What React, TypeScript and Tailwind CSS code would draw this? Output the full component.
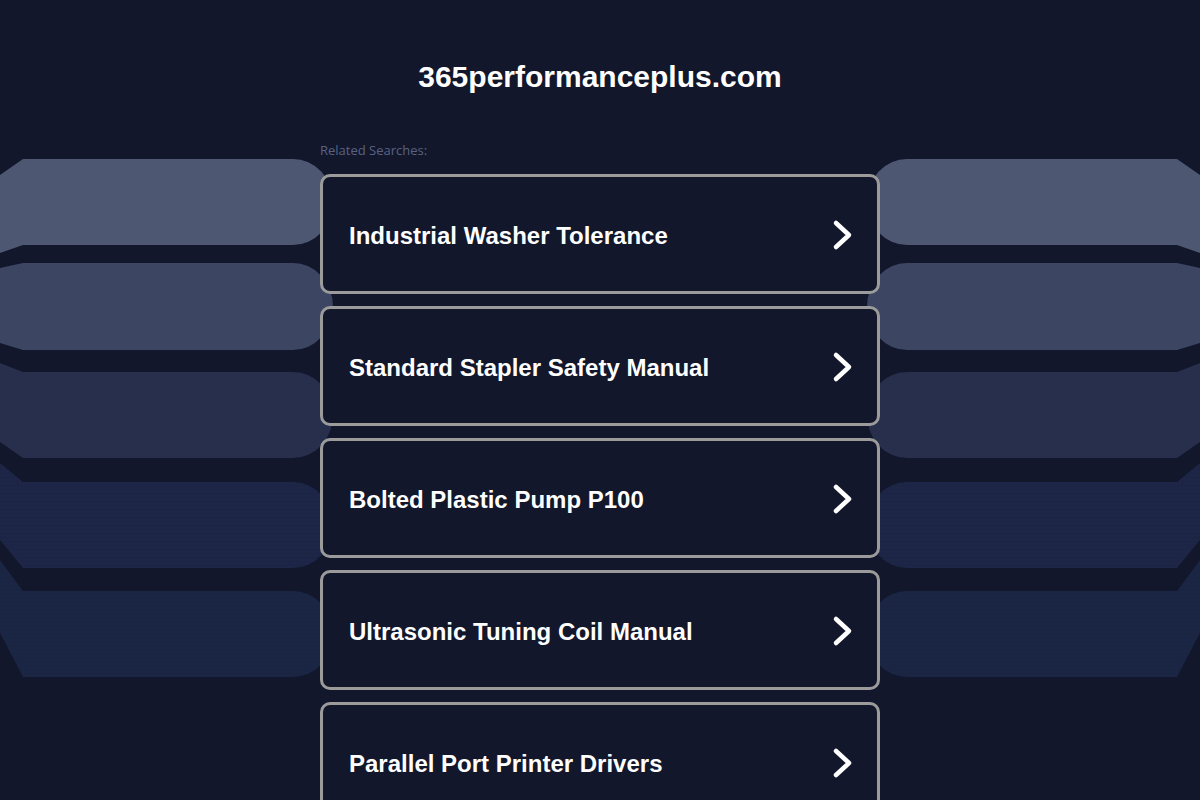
import React from "react";

const SEARCHES = [
  "Industrial Washer Tolerance",
  "Standard Stapler Safety Manual",
  "Bolted Plastic Pump P100",
  "Ultrasonic Tuning Coil Manual",
  "Parallel Port Printer Drivers",
];

// left-side bands: top, bottom, left-edge top, left-edge bottom, fill
const BANDS = [
  { t: 159, b: 245, lt: 175, lb: 253, fill: "#4e5772", dots: false },
  { t: 263, b: 350, lt: 268, lb: 343, fill: "#3c4562", dots: false },
  { t: 372, b: 458, lt: 363, lb: 442, fill: "#272f4d", dots: false },
  { t: 482, b: 568, lt: 463, lb: 540, fill: "#1d2646", dots: true },
  { t: 591, b: 677, lt: 560, lb: 633, fill: "#1b2544", dots: true },
];

function bandPath(t: number, b: number, lt: number, lb: number) {
  const ry = (b - t) / 2;
  return `M0 ${lt} L23 ${t} H293 A40 ${ry} 0 0 1 293 ${b} H23 L0 ${lb} Z`;
}

function Backdrop() {
  const shapes = BANDS.map((s, i) => (
    <g key={i}>
      <path d={bandPath(s.t, s.b, s.lt, s.lb)} fill={s.fill} />
      {s.dots && <path d={bandPath(s.t, s.b, s.lt, s.lb)} fill="url(#dots)" />}
    </g>
  ));
  return (
    <svg className="pointer-events-none absolute left-0 top-0" width="1200" height="800" viewBox="0 0 1200 800">
      <defs>
        <pattern id="dots" width="4" height="4" patternUnits="userSpaceOnUse">
          <rect x="1" y="1" width="1" height="1" fill="#121a35" opacity="0.6" />
        </pattern>
      </defs>
      {shapes}
      <g transform="translate(1200,0) scale(-1,1)">{shapes}</g>
    </svg>
  );
}

function Chevron() {
  return (
    <svg width="24" height="32" viewBox="0 0 24 32" className="shrink-0">
      <polyline
        points="5,4 18,16 5,28"
        fill="none"
        stroke="#ffffff"
        strokeWidth="4.5"
        strokeLinecap="round"
        strokeLinejoin="round"
      />
    </svg>
  );
}

export default function App() {
  return (
    <div className="relative min-h-[800px] overflow-hidden bg-[#12172b] font-['Liberation_Sans',Arial,sans-serif]">
      <Backdrop />
      <div className="relative mx-auto flex w-[560px] flex-col">
        <h1 className="pt-[59px] text-center text-[30px] font-bold leading-[36px] text-white">
          365performanceplus.com
        </h1>
        <p className="mt-[46px] font-['Open_Sans',sans-serif] text-[13px] leading-[18px] text-[#5a6283]">
          Related Searches:
        </p>
        <div className="mt-[15px] flex flex-col gap-[12px]">
          {SEARCHES.map((s) => (
            <a
              key={s}
              href="#"
              className="flex h-[120px] items-center justify-between rounded-[10px] border-[3px] border-[#9b9b9b] bg-[#12172b] pl-[26px] pr-[22px] pt-[2px]"
            >
              <span className="mt-[2px] text-[24px] font-bold text-white">{s}</span>
              <Chevron />
            </a>
          ))}
        </div>
      </div>
    </div>
  );
}
